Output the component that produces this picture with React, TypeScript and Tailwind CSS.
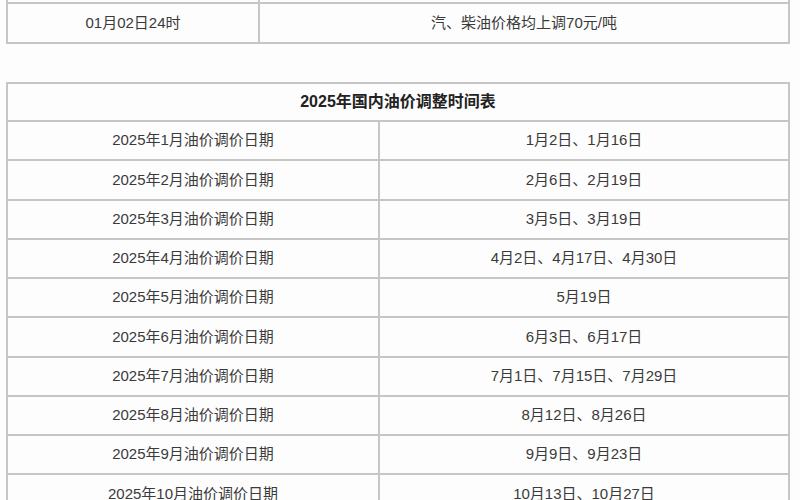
const rows: [string, string][] = [
  ["2025年1月油价调价日期", "1月2日、1月16日"],
  ["2025年2月油价调价日期", "2月6日、2月19日"],
  ["2025年3月油价调价日期", "3月5日、3月19日"],
  ["2025年4月油价调价日期", "4月2日、4月17日、4月30日"],
  ["2025年5月油价调价日期", "5月19日"],
  ["2025年6月油价调价日期", "6月3日、6月17日"],
  ["2025年7月油价调价日期", "7月1日、7月15日、7月29日"],
  ["2025年8月油价调价日期", "8月12日、8月26日"],
  ["2025年9月油价调价日期", "9月9日、9月23日"],
  ["2025年10月油价调价日期", "10月13日、10月27日"],
];

const font = { fontFamily: '"Liberation Sans", "Noto Sans CJK SC", sans-serif' };

export default function App() {
  return (
    <div
      className="h-[500px] w-[800px] overflow-hidden bg-[#fdfdfd] text-[15px] text-[#3a3a3a]"
      style={font}
    >
      {/* previous adjustment table (cut off at top) */}
      <div className="ml-[6px] w-[784px] border-x-2 border-[#c6c6c6]">
        <div className="flex h-[4px] border-b-2 border-[#c6c6c6]">
          <div className="w-[252px] border-r-2 border-[#c6c6c6]" />
          <div className="flex-1" />
        </div>
        <div className="flex h-[40px] border-b-2 border-[#c6c6c6]">
          <div className="flex w-[252px] items-center justify-center border-r-2 border-[#c6c6c6]">
            01月02日24时
          </div>
          <div className="flex flex-1 items-center justify-center">
            汽、柴油价格均上调70元/吨
          </div>
        </div>
      </div>

      {/* 2025 schedule */}
      <div className="ml-[6px] mt-[38px] w-[784px] border-x-2 border-t-2 border-[#c6c6c6]">
        <div className="flex h-[38px] items-center justify-center border-b-2 border-[#c6c6c6] text-[16px] font-bold text-[#222]">
          2025年国内油价调整时间表
        </div>
        {rows.map(([label, dates]) => (
          <div key={label} className="flex h-[39.25px] border-b-2 border-[#c6c6c6]">
            <div className="flex w-[372px] items-center justify-center border-r-2 border-[#c6c6c6]">
              {label}
            </div>
            <div className="flex flex-1 items-center justify-center">{dates}</div>
          </div>
        ))}
      </div>
    </div>
  );
}
